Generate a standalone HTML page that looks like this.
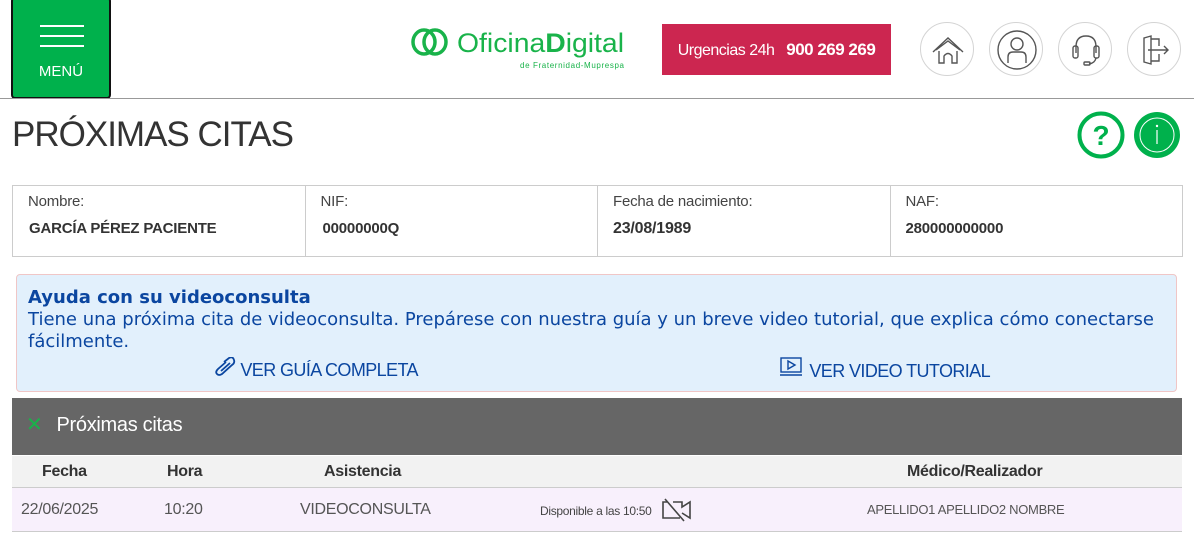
<!DOCTYPE html>
<html><head><meta charset="utf-8"><style>
*{box-sizing:border-box;margin:0;padding:0}
body{width:1194px;height:545px;overflow:hidden;background:#fff;font-family:"Liberation Sans",Arial,sans-serif;position:relative;color:#333}
.abs{position:absolute}
.menu{left:11px;top:-3px;width:100px;height:102px;background:#00b14c;border:2px solid #111;border-radius:4px}
.menu i{position:absolute;left:27px;width:44px;height:2px;background:#fff}
.hline{left:0;top:98px;width:1194px;height:1px;background:#999}
.urg{left:662px;top:24px;width:229px;height:51px;background:#cc2650;color:#fff;font-size:16px;line-height:51px;text-align:center;letter-spacing:-0.5px}
.circ{top:22px;width:54px;height:54px;border-radius:50%;border:1px solid #d4d4d4}
.circ svg{position:absolute;left:0;top:0}
.info{left:12px;top:185px;width:1171px;height:72px;border:1px solid #ccc;display:flex}
.info div{flex:1;border-right:1px solid #ccc;padding:7px 0 0 15px;font-size:15px;color:#444;letter-spacing:-0.2px}
.info div:last-child{border-right:none}
.info b{display:block;margin-top:10px;font-size:16px;color:#333}
.help{left:16px;top:274px;width:1161px;height:118px;background:#e2f0fc;border:1px solid #f0c6c6;border-radius:4px;color:#0b46a0;font-family:"DejaVu Sans",Verdana,sans-serif;font-size:18px;line-height:22px;padding:12px 0 0 11px}
.lnk{position:absolute;top:82px;font-family:"Liberation Sans",Arial,sans-serif;font-size:18px;color:#0b46a0;letter-spacing:-0.6px}
.bar{left:12px;top:398px;width:1170px;height:57px;background:#666;color:#fff;font-size:20px;line-height:55px;letter-spacing:-0.3px}
.th{left:12px;top:456px;width:1170px;height:32px;background:#f2f2f2;border-bottom:1px solid #ccc;font-size:16px;font-weight:bold;color:#333;letter-spacing:-0.3px}
.tr{left:12px;top:488px;width:1170px;height:44px;background:#f8f0fc;border-bottom:1px solid #ccc;color:#555;letter-spacing:-0.3px}
.th span,.tr span{position:absolute}
</style></head><body>
<div class="abs menu"><i style="top:26px"></i><i style="top:36px"></i><i style="top:46px"></i><div style="position:absolute;top:64px;width:96px;text-align:center;color:#fff;font-size:15px">MENÚ</div></div>
<div class="abs hline"></div>
<svg class="abs" style="left:410px;top:26px" width="220" height="46">
<ellipse cx="14" cy="16" rx="11" ry="12" fill="none" stroke="#19b34a" stroke-width="3.5"/>
<ellipse cx="25" cy="16" rx="11" ry="12" fill="none" stroke="#19b34a" stroke-width="3.5"/>
<text x="47" y="26" font-family="Liberation Sans,sans-serif" font-size="27" fill="#19b34a" textLength="167" lengthAdjust="spacingAndGlyphs">Oficina<tspan font-weight="bold">D</tspan>igital</text>
<text x="110" y="42" font-family="Liberation Sans,sans-serif" font-size="8" fill="#19b34a" textLength="104">de Fraternidad-Muprespa</text>
</svg>
<div class="abs urg">Urgencias 24h &nbsp; <b style="font-size:17px">900 269 269</b></div>
<div class="abs circ" style="left:920px"><svg width="54" height="54" fill="none" stroke="#555" stroke-width="1.4"><path d="M12 29 L27 15 L42 29 M15 27 L27 18 L39 27 M18 28 V40 H23 V33 Q27 28 31 33 V40 H36 V28"/></svg></div>
<div class="abs circ" style="left:989px"><svg width="54" height="54" fill="none" stroke="#555" stroke-width="1.4"><circle cx="27" cy="27" r="19"/><circle cx="27" cy="21" r="6"/><path d="M18 40 V34 Q18 29 23 29 H31 Q36 29 36 34 V40"/></svg></div>
<div class="abs circ" style="left:1058px"><svg width="54" height="54" fill="none" stroke="#555" stroke-width="1.4"><path d="M17 30 V24 Q17 13 27 13 Q37 13 37 24 V30"/><rect x="14" y="23" width="5" height="12" rx="2"/><rect x="35" y="23" width="5" height="12" rx="2"/><path d="M37 35 Q36 40 30 41"/><rect x="25" y="39" width="6" height="3" rx="1"/></svg></div>
<div class="abs circ" style="left:1127px"><svg width="54" height="54" fill="none" stroke="#555" stroke-width="1.4"><path d="M23 13 V41 L16 39 V15 Z M23 16 H31 V23 M31 31 V38 H23 M20 27 H40 M36 23 L40 27 L36 31"/></svg></div>
<div class="abs" style="left:12px;top:115px;font-size:35px;color:#333;letter-spacing:-1px">PRÓXIMAS CITAS</div>
<svg class="abs" style="left:1076px;top:110px" width="110" height="50"><circle cx="25" cy="25" r="21.5" fill="none" stroke="#00b14c" stroke-width="4"/><text x="25" y="35" text-anchor="middle" font-family="Liberation Sans,sans-serif" font-weight="bold" font-size="28" fill="#00b14c">?</text><circle cx="81" cy="25" r="23" fill="#00b14c"/><circle cx="81" cy="25" r="17" fill="none" stroke="#fff" stroke-width="1"/><circle cx="81" cy="16" r="1.2" fill="#fff"/><path d="M81 20 V34" stroke="#fff" stroke-width="1.2"/></svg>
<div class="abs info"><div>Nombre:<b style="font-size:15px;margin-left:1px">GARCÍA PÉREZ PACIENTE</b></div><div>NIF:<b style="font-size:15px;margin-left:2px">00000000Q</b></div><div>Fecha de nacimiento:<b>23/08/1989</b></div><div>NAF:<b style="font-size:15px">280000000000</b></div></div>
<div class="abs help"><b>Ayuda con su videoconsulta</b><br>Tiene una próxima cita de videoconsulta. Prepárese con nuestra guía y un breve video tutorial, que explica cómo conectarse fácilmente.
<div class="lnk" style="left:195px"><svg width="24" height="22" style="vertical-align:-3px" fill="none" stroke="#0b46a0" stroke-width="1.8"><path d="M12 5 L17 1 Q21 -1 22 3 Q23 6 20 8 L10 17 Q7 19 5 17 Q3 15 6 12 L14 5"/><path d="M9 14 L18 6"/></svg> VER GUÍA COMPLETA</div>
<div class="lnk" style="left:762px"><svg width="26" height="22" style="vertical-align:-2px" fill="none" stroke="#0b46a0" stroke-width="1.4"><rect x="2" y="1" width="20" height="14"/><path d="M9 4 V12 L16 8 Z M1 18 H23"/></svg> VER VIDEO TUTORIAL</div></div>
<div class="abs bar"><span style="color:#19b34a;margin:0 14px 0 14px;font-size:20px">✕</span>Próximas citas</div>
<div class="abs th"><span style="left:30px;top:7px">Fecha</span><span style="left:155px;top:7px">Hora</span><span style="left:312px;top:7px">Asistencia</span><span style="left:895px;top:7px">Médico/Realizador</span></div>
<div class="abs tr"><span style="left:9px;top:13px;font-size:16px">22/06/2025</span><span style="left:152px;top:13px;font-size:16px">10:20</span><span style="left:288px;top:13px;font-size:16px">VIDEOCONSULTA</span><span style="left:528px;top:16px;font-size:12px;color:#444">Disponible a las 10:50</span>
<svg style="position:absolute;left:649px;top:10px" width="32" height="24" fill="none" stroke="#444" stroke-width="1.6"><path d="M6 4 H2 V20 H19 M12 4 H21 V9 L29 4 V20 L21 15 M4 1 L23 23"/></svg>
<span style="left:855px;top:14px;font-size:13px;color:#555">APELLIDO1 APELLIDO2 NOMBRE</span></div>
</body></html>
